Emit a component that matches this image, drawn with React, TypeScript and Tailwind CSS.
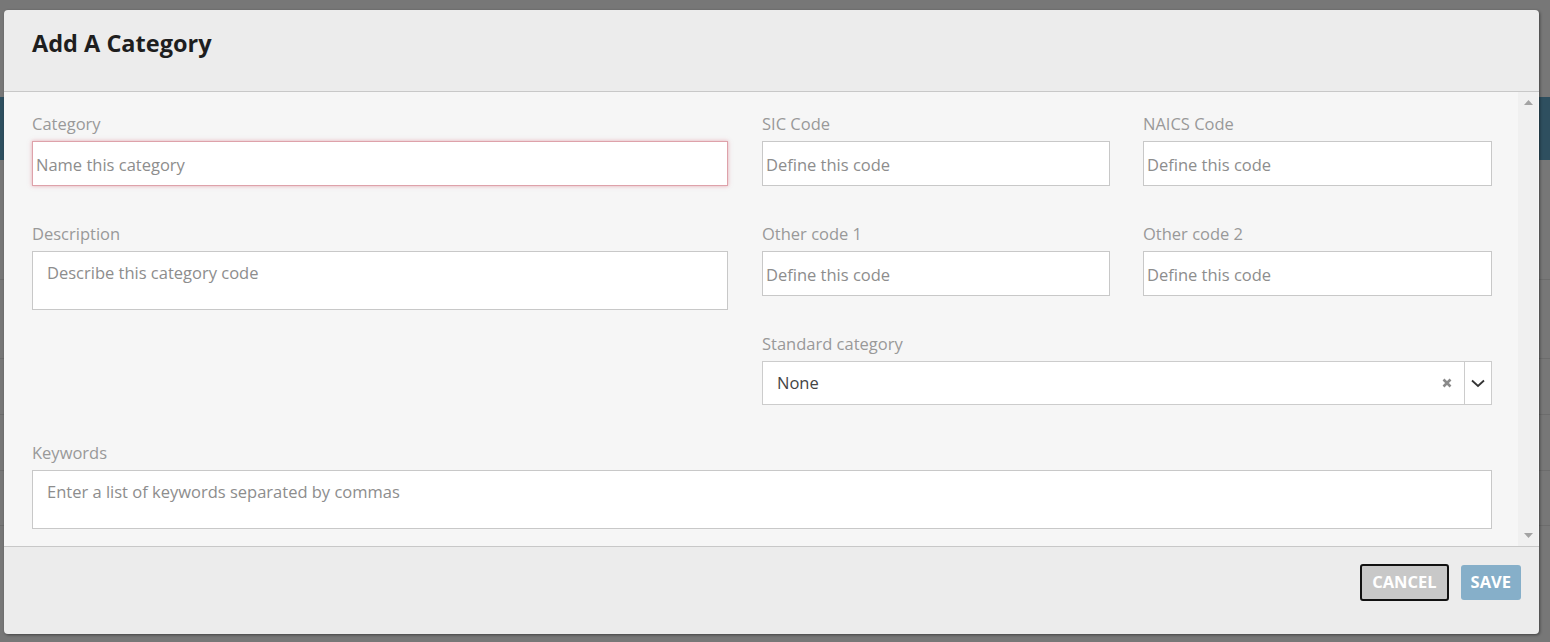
import React from "react";

const font = { fontFamily: '"Open Sans", "Noto Sans", sans-serif' };

function Label({ children }: { children: React.ReactNode }) {
  return <div className="h-[24px] leading-[24px] mb-[5px] text-[16.5px] text-[#999999]">{children}</div>;
}

function TextInput({ placeholder, focus }: { placeholder: string; focus?: boolean }) {
  return (
    <div
      className={
        "h-[45px] bg-white flex items-center pl-[3px] pt-[3px] text-[16.5px] text-[#8d8d8d] border " +
        (focus ? "border-[#dea2aa] shadow-[0_0_4px_rgba(214,110,128,0.55)]" : "border-[#c8c8c8]")
      }
    >
      {placeholder}
    </div>
  );
}

function TextArea({ placeholder }: { placeholder: string }) {
  return (
    <div className="h-[59px] bg-white border border-[#c8c8c8] pl-[14px] pt-[9px] text-[16.5px] leading-[24px] text-[#8d8d8d]">
      {placeholder}
    </div>
  );
}

export default function App() {
  return (
    <div className="relative w-[1550px] h-[642px] overflow-hidden bg-[#777777]" style={font}>
      {/* backdrop page */}
      <div className="flex flex-col">
        <div className="h-[97px]" />
        <div className="h-[63px] bg-[#2e4f5f]" />
        <div className="h-[119px]" />
        <div className="h-px bg-[#6c6c6c]" />
        <div className="h-[78px]" />
        <div className="h-px bg-[#6c6c6c]" />
        <div className="h-[55px]" />
        <div className="h-px bg-[#6c6c6c]" />
        <div className="h-[55px]" />
        <div className="h-px bg-[#6c6c6c]" />
        <div className="h-[54px]" />
        <div className="h-px bg-[#6c6c6c]" />
      </div>

      {/* modal */}
      <div className="absolute left-[4px] top-[10px] w-[1535px] h-[624px] rounded-[4px] bg-[#ececec] flex flex-col overflow-hidden shadow-[1px_1px_3px_rgba(0,0,0,0.45)]">
        <div className="h-[82px] shrink-0 border-b border-[#c8c8c8] pl-[28px] flex items-center">
          <h1 className="text-[23.5px] font-bold text-[#1e1e1e] -mt-[13px]">Add A Category</h1>
        </div>

        <div className="h-[455px] shrink-0 flex bg-[#f6f6f6] border-b border-[#c8c8c8]">
          <div className="flex-1 pl-[28px] pt-[20px]">
            <div className="flex gap-[34px]">
              <div className="w-[696px] flex flex-col">
                <Label>Category</Label>
                <TextInput placeholder="Name this category" focus />
                <div className="h-[36px]" />
                <Label>Description</Label>
                <TextArea placeholder="Describe this category code" />
              </div>
              <div className="w-[730px] flex flex-col">
                <div className="grid grid-cols-[348px_349px] gap-x-[33px] gap-y-[36px]">
                  <div>
                    <Label>SIC Code</Label>
                    <TextInput placeholder="Define this code" />
                  </div>
                  <div>
                    <Label>NAICS Code</Label>
                    <TextInput placeholder="Define this code" />
                  </div>
                  <div>
                    <Label>Other code 1</Label>
                    <TextInput placeholder="Define this code" />
                  </div>
                  <div>
                    <Label>Other code 2</Label>
                    <TextInput placeholder="Define this code" />
                  </div>
                </div>
                <div className="h-[36px]" />
                <Label>Standard category</Label>
                <div className="h-[44px] bg-white border border-[#cccccc] flex items-center">
                  <div className="flex-1 pl-[14px] text-[16.5px] text-[#444444]">None</div>
                  <div className="w-[30px] flex items-center justify-center pr-[4px]">
                    <svg width="10" height="10" viewBox="0 0 10 10">
                      <path d="M1.5 1.5 L8.5 8.5 M8.5 1.5 L1.5 8.5" stroke="#8a8a8a" strokeWidth="2.6" strokeLinecap="butt" />
                    </svg>
                  </div>
                  <div className="w-px h-full bg-[#cccccc]" />
                  <div className="w-[26px] flex items-center justify-center">
                    <svg width="14" height="9" viewBox="0 0 14 9">
                      <path d="M1 1.5 L7 7 L13 1.5" fill="none" stroke="#333333" strokeWidth="1.8" />
                    </svg>
                  </div>
                </div>
              </div>
            </div>
            <div className="h-[36px]" />
            <div className="w-[1460px]">
              <Label>Keywords</Label>
              <TextArea placeholder="Enter a list of keywords separated by commas" />
            </div>
          </div>
          <div className="w-[20px] bg-[#f0f0f0] flex flex-col items-center justify-between py-[8px] mr-[1px]">
            <svg width="9" height="5" viewBox="0 0 9 5"><path d="M0 5 L4.5 0 L9 5 Z" fill="#a3a3a3" /></svg>
            <svg width="9" height="5" viewBox="0 0 9 5"><path d="M0 0 L4.5 5 L9 0 Z" fill="#a3a3a3" /></svg>
          </div>
        </div>

        <div className="flex-1 flex items-start justify-end gap-[12px] pr-[18px] pt-[17px]">
          <button className="h-[37px] px-[10px] bg-[#c8c8c8] border-2 border-[#111111] rounded-[3px] text-white font-bold text-[16.5px]">
            CANCEL
          </button>
          <button className="h-[35px] mt-[1px] px-[10px] bg-[#86afc9] rounded-[3px] text-white font-bold text-[16.5px]">
            SAVE
          </button>
        </div>
      </div>
    </div>
  );
}
